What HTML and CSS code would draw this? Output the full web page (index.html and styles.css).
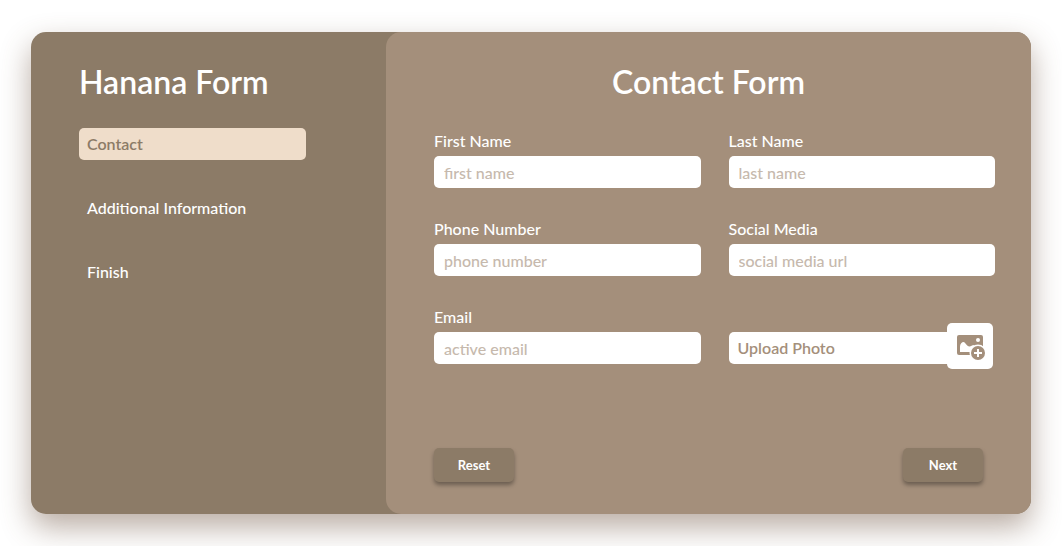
FILE: index.html
```html
<!DOCTYPE html>
<html lang="en">
<head>
<meta charset="utf-8">
<meta name="viewport" content="width=device-width, initial-scale=1">
<title>Hanana Form</title>
<link rel="stylesheet" href="styles.css">
</head>
<body>
<div class="card">
  <aside class="sidebar">
    <h1 class="title">Hanana Form</h1>
    <nav class="steps">
      <a class="step step-active" href="#contact" aria-current="step">Contact</a>
      <a class="step" href="#additional">Additional Information</a>
      <a class="step" href="#finish">Finish</a>
    </nav>
  </aside>
  <main class="main">
    <h2 class="title title-center">Contact Form</h2>
    <form class="form" id="contact">
      <div class="fields">
        <div class="field">
          <label class="label" for="first">First Name</label>
          <input class="input" id="first" type="text" placeholder="first name">
        </div>
        <div class="field">
          <label class="label" for="last">Last Name</label>
          <input class="input" id="last" type="text" placeholder="last name">
        </div>
        <div class="field">
          <label class="label" for="phone">Phone Number</label>
          <input class="input" id="phone" type="tel" placeholder="phone number">
        </div>
        <div class="field">
          <label class="label" for="social">Social Media</label>
          <input class="input" id="social" type="url" placeholder="social media url">
        </div>
        <div class="field">
          <label class="label" for="email">Email</label>
          <input class="input" id="email" type="email" placeholder="active email">
        </div>
        <div class="field field-upload">
          <input class="file" id="photo" type="file" accept="image/*">
          <label class="upload" for="photo">
            <span>Upload Photo</span>
            <span class="upload-icon">
              <svg width="30" height="30" viewBox="0 0 30 30" aria-hidden="true">
                <rect x="2" y="4" width="26" height="20" rx="2" fill="#a48f7b"/>
                <path d="M5 21V15.500C5 13 7 11 8.500 11C10.500 11 11.500 15.500 14.500 15.500C16 15.500 17 14 19 14L18 21Z" fill="#fff"/>
                <circle cx="23" cy="9" r="2" fill="#fff"/>
                <circle cx="23" cy="22" r="8.500" fill="#fff"/>
                <circle cx="23" cy="22" r="7" fill="#a48f7b"/>
                <path d="M23 18V26M19 22H27" stroke="#fff" stroke-width="2"/>
              </svg>
            </span>
          </label>
        </div>
      </div>
      <div class="actions">
        <button class="button" type="reset">Reset</button>
        <button class="button" type="submit">Next</button>
      </div>
    </form>
  </main>
</div>
</body>
</html>
```
FILE: styles.css
```css
* {
  box-sizing: border-box;
}

body {
  margin: 0;
  min-height: 100vh;
  display: grid;
  place-items: center;
  padding: 32px 31px;
  background: #fff;
  color: #fff;
  font-family: Lato, "Open Sans", sans-serif;
  font-size: 16px;
  font-weight: 500;
}

.card {
  display: grid;
  grid-template-columns: 355fr 645fr;
  width: 100%;
  max-width: 1000px;
  border-radius: 15px;
  background: #8c7b67;
  box-shadow: 0 13px 30px rgba(100, 70, 50, 0.45);
}

.sidebar {
  padding: 30px 80px 30px 48px;
}

.main {
  padding: 30px 36px 32px 48px;
  border-radius: 15px;
  background: #a48f7b;
}

.title {
  margin: 0 0 26px;
  font-size: 32px;
  line-height: 40px;
  font-weight: 600;
}

.title-center {
  margin-left: -12px;
  text-align: center;
}

.steps {
  display: flex;
  flex-direction: column;
  gap: 32px;
}

.step {
  padding: 0 8px;
  border-radius: 5px;
  line-height: 32px;
  color: #fff;
  text-decoration: none;
}

.step-active {
  background: #efddca;
  color: #8c7b67;
  font-weight: 600;
}

.fields {
  display: grid;
  grid-template-columns: 1fr 1fr;
  gap: 28px;
}

.field {
  display: flex;
  flex-direction: column;
  gap: 6px;
  padding-top: 4px;
}

.label {
  line-height: 18px;
}

.input,
.upload {
  width: 100%;
  height: 32px;
  border: 0;
  border-radius: 5px;
  background: #fff;
  color: #8c7b67;
  font: inherit;
}

.input {
  padding: 0 10px;
}

.input::placeholder {
  color: #c6b9ad;
  opacity: 1;
}

.field-upload {
  justify-content: flex-end;
  padding-right: 12px;
}

.file {
  position: absolute;
  width: 1px;
  height: 1px;
  opacity: 0;
}

.upload {
  position: relative;
  padding: 0 9px;
  line-height: 32px;
  color: #a48f7b;
  font-weight: 600;
  cursor: pointer;
}

.upload-icon {
  position: absolute;
  top: -9px;
  right: -10px;
  display: grid;
  place-items: center;
  width: 46px;
  height: 46px;
  border-radius: 5px;
  background: #fff;
}

.actions {
  display: flex;
  justify-content: space-between;
  margin-top: 84px;
  padding-right: 12px;
}

.button {
  width: 80px;
  height: 34px;
  border: 0;
  border-radius: 5px;
  background: #8c7b67;
  box-shadow: 0 3px 4px rgba(0, 0, 0, 0.35);
  color: #fff;
  font: inherit;
  font-size: 13px;
  font-weight: 700;
  cursor: pointer;
}
```
